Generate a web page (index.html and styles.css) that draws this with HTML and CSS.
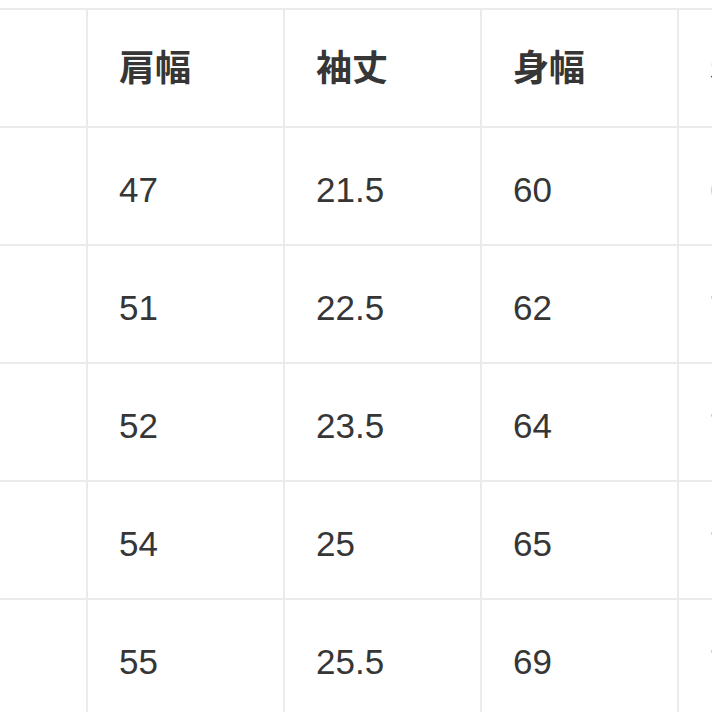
FILE: index.html
```html
<!DOCTYPE html>
<html lang="ja">
<head>
<meta charset="utf-8">
<title>サイズ表</title>
<link rel="stylesheet" href="styles.css">
</head>
<body>
<div class="viewport">
  <div class="size-table">
    <div class="cell head"></div>
    <div class="cell head">肩幅</div>
    <div class="cell head">袖丈</div>
    <div class="cell head">身幅</div>
    <div class="cell head">着丈</div>

    <div class="cell"></div>
    <div class="cell num">47</div>
    <div class="cell num">21.5</div>
    <div class="cell num">60</div>
    <div class="cell num">68</div>

    <div class="cell"></div>
    <div class="cell num">51</div>
    <div class="cell num">22.5</div>
    <div class="cell num">62</div>
    <div class="cell num">70</div>

    <div class="cell"></div>
    <div class="cell num">52</div>
    <div class="cell num">23.5</div>
    <div class="cell num">64</div>
    <div class="cell num">72</div>

    <div class="cell"></div>
    <div class="cell num">54</div>
    <div class="cell num">25</div>
    <div class="cell num">65</div>
    <div class="cell num">73</div>

    <div class="cell"></div>
    <div class="cell num">55</div>
    <div class="cell num">25.5</div>
    <div class="cell num">69</div>
    <div class="cell num">75</div>
  </div>
</div>
</body>
</html>
```
FILE: styles.css
```css
html, body {
  margin: 0;
  padding: 0;
  background: #ffffff;
}
.viewport {
  width: 712px;
  height: 712px;
  overflow: hidden;
  padding-top: 8px;
  box-sizing: border-box;
}
.size-table {
  display: grid;
  grid-template-columns: 86px 195px 195px 195px 195px;
  grid-auto-rows: 116px;
  gap: 2px;
  padding-top: 2px;
  background: #ebebeb;
  width: max-content;
}
.cell {
  background: #ffffff;
  display: flex;
  align-items: center;
  padding-left: 31px;
  color: #363636;
  white-space: nowrap;
  overflow: hidden;
}
.head {
  font-family: "Noto Sans CJK JP", "Noto Sans", sans-serif;
  font-weight: 700;
  font-size: 36px;
  padding-bottom: 6px;
  box-sizing: border-box;
}
.num {
  font-family: "Liberation Sans", Arial, sans-serif;
  font-size: 35px;
  padding-top: 8px;
  box-sizing: border-box;
}
```
